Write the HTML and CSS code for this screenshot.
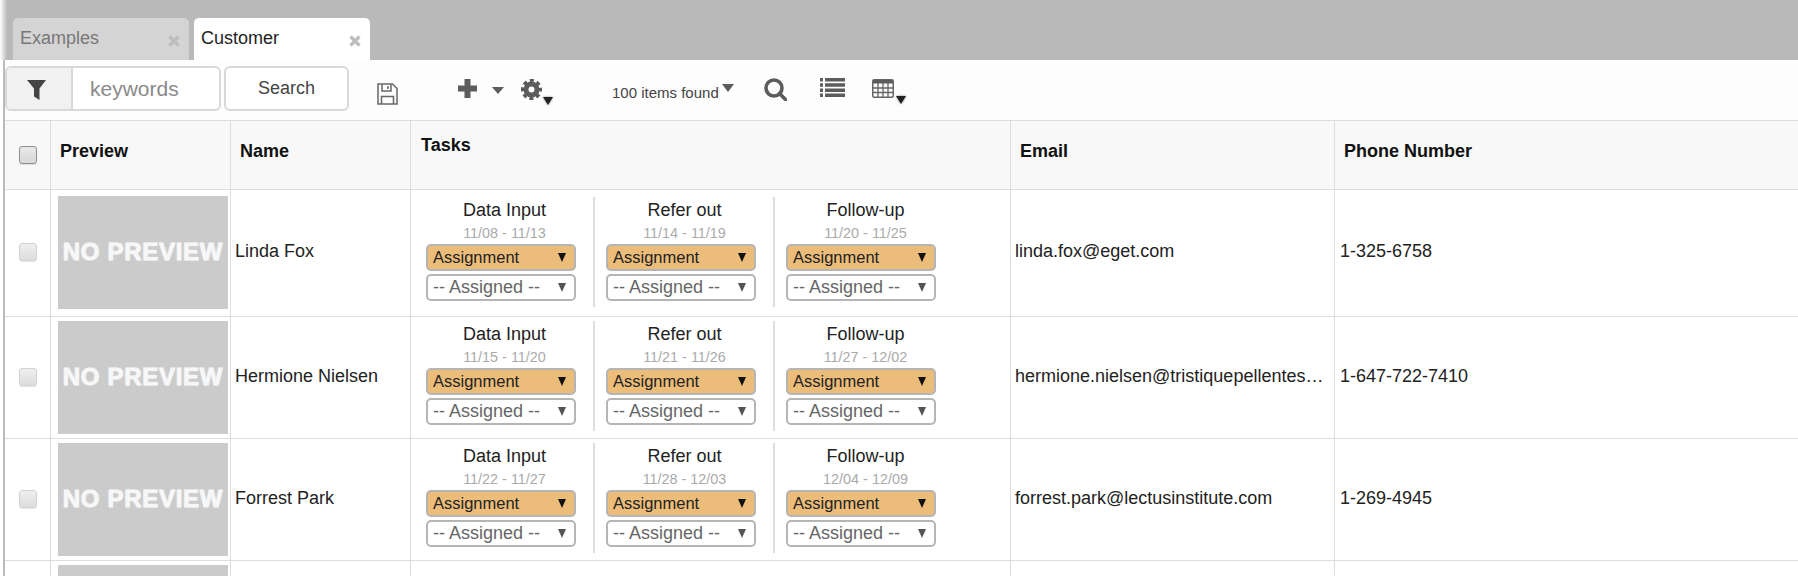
FILE: index.html
```html
<!DOCTYPE html>
<html lang="en">
<head>
  <meta charset="UTF-8">
  <title>Customer</title>
  <link rel="stylesheet" href="styles.css">
</head>
<body>
  <!-- Tabs -->
  <div class="tabbar">
    <div class="tab">
      <span>Examples</span>
      <svg class="tab-close" width="12" height="12" viewBox="0 0 12 12"><path d="M1.5 1.5l9 9M10.5 1.5l-9 9"/></svg>
    </div>
    <div class="tab tab-active">
      <span>Customer</span>
      <svg class="tab-close" width="12" height="12" viewBox="0 0 12 12"><path d="M1.5 1.5l9 9M10.5 1.5l-9 9"/></svg>
    </div>
  </div>

  <div class="main">
    <!-- Toolbar -->
    <div class="toolbar">
      <div class="filter-box">
        <div class="filter-addon">
          <svg width="19" height="20" viewBox="0 0 19 20"><path class="fill-dark" d="M0 0h19l-6.5 8.5V20L7 16.5V8.5z"/></svg>
        </div>
        <span class="filter-text">keywords</span>
      </div>
      <button class="search-btn">Search</button>

      <svg class="icon icon-save" width="21" height="22" viewBox="0 0 21 22">
        <path class="line" d="M1 1h14.500l4.500 4.500V21H1z"/>
        <path class="line" d="M5 1.500V8h9V1.500M11 3v3M4.500 21v-7.500h12V21"/>
      </svg>
      <svg class="icon icon-plus" width="19" height="19" viewBox="0 0 19 19"><path class="fill" d="M6.500 0h6v6.500H19v6h-6.500V19h-6v-6.500H0v-6h6.500z"/></svg>
      <svg class="icon icon-caret" width="12" height="7" viewBox="0 0 12 7"><path class="fill" d="M0 0h12L6 7z"/></svg>

      <div class="icon icon-gear">
        <svg width="21" height="21" viewBox="0 0 21 21">
          <circle class="gear-ring" cx="10.500" cy="10.500" r="5.500"/>
          <circle class="gear-teeth" cx="10.500" cy="10.500" r="8.800"/>
        </svg>
        <svg class="badge" width="10" height="8" viewBox="0 0 10 8"><path d="M0 0h10L5 8z"/></svg>
      </div>

      <span class="count">100 items found</span>
      <svg class="icon icon-count-caret" width="12" height="8" viewBox="0 0 12 8"><path class="fill" d="M0 0h12L6 8z"/></svg>

      <svg class="icon icon-search" width="23" height="23" viewBox="0 0 23 23">
        <circle class="thick" cx="10" cy="10" r="8"/>
        <path class="thick" d="M15.500 15.500l6 6"/>
      </svg>
      <svg class="icon icon-list" width="25" height="19" viewBox="0 0 25 19">
        <path class="fill" d="M0 0h3v3.500H0zM5 0h20v3.500H5zM0 5.200h3v3.500H0zM5 5.200h20v3.500H5zM0 10.400h3v3.500H0zM5 10.400h20v3.500H5zM0 15.500h3V19H0zM5 15.500h20V19H5z"/>
      </svg>
      <div class="icon icon-table">
        <svg width="22" height="19" viewBox="0 0 22 19">
          <rect class="line" x="0.750" y="0.750" width="20.500" height="17.500" rx="1.500"/>
          <path class="fill" d="M1 1h20v3.500H1z"/>
          <path class="grid" d="M1 9h20M1 13.500h20M6 4v14M11 4v14M16 4v14"/>
        </svg>
        <svg class="badge" width="10" height="8" viewBox="0 0 10 8"><path d="M0 0h10L5 8z"/></svg>
      </div>
    </div>

    <!-- Table -->
    <table class="grid-table">
      <colgroup>
        <col class="col-check"><col class="col-preview"><col class="col-name"><col class="col-tasks"><col class="col-email"><col>
      </colgroup>
      <thead>
        <tr>
          <th class="check-cell"><input type="checkbox" class="check check-head"></th>
          <th>Preview</th>
          <th>Name</th>
          <th class="tasks-head">Tasks</th>
          <th>Email</th>
          <th>Phone Number</th>
        </tr>
      </thead>
      <tbody>
        <tr class="row-first">
          <td class="check-cell"><input type="checkbox" class="check"></td>
          <td class="preview-cell"><div class="no-preview">NO PREVIEW</div></td>
          <td>Linda Fox</td>
          <td class="tasks-cell">
            <div class="tasks">
              <div class="task">
                <div class="task-title">Data Input</div>
                <div class="task-date">11/08 - 11/13</div>
                <div class="pick pick-assign">Assignment</div>
                <div class="pick">-- Assigned --</div>
              </div>
              <div class="task">
                <div class="task-title">Refer out</div>
                <div class="task-date">11/14 - 11/19</div>
                <div class="pick pick-assign">Assignment</div>
                <div class="pick">-- Assigned --</div>
              </div>
              <div class="task">
                <div class="task-title">Follow-up</div>
                <div class="task-date">11/20 - 11/25</div>
                <div class="pick pick-assign">Assignment</div>
                <div class="pick">-- Assigned --</div>
              </div>
            </div>
          </td>
          <td>linda.fox@eget.com</td>
          <td class="phone-cell">1-325-6758</td>
        </tr>
        <tr>
          <td class="check-cell"><input type="checkbox" class="check"></td>
          <td class="preview-cell"><div class="no-preview">NO PREVIEW</div></td>
          <td>Hermione Nielsen</td>
          <td class="tasks-cell">
            <div class="tasks">
              <div class="task">
                <div class="task-title">Data Input</div>
                <div class="task-date">11/15 - 11/20</div>
                <div class="pick pick-assign">Assignment</div>
                <div class="pick">-- Assigned --</div>
              </div>
              <div class="task">
                <div class="task-title">Refer out</div>
                <div class="task-date">11/21 - 11/26</div>
                <div class="pick pick-assign">Assignment</div>
                <div class="pick">-- Assigned --</div>
              </div>
              <div class="task">
                <div class="task-title">Follow-up</div>
                <div class="task-date">11/27 - 12/02</div>
                <div class="pick pick-assign">Assignment</div>
                <div class="pick">-- Assigned --</div>
              </div>
            </div>
          </td>
          <td>hermione.nielsen@tristiquepellentes…</td>
          <td class="phone-cell">1-647-722-7410</td>
        </tr>
        <tr>
          <td class="check-cell"><input type="checkbox" class="check"></td>
          <td class="preview-cell"><div class="no-preview">NO PREVIEW</div></td>
          <td>Forrest Park</td>
          <td class="tasks-cell">
            <div class="tasks">
              <div class="task">
                <div class="task-title">Data Input</div>
                <div class="task-date">11/22 - 11/27</div>
                <div class="pick pick-assign">Assignment</div>
                <div class="pick">-- Assigned --</div>
              </div>
              <div class="task">
                <div class="task-title">Refer out</div>
                <div class="task-date">11/28 - 12/03</div>
                <div class="pick pick-assign">Assignment</div>
                <div class="pick">-- Assigned --</div>
              </div>
              <div class="task">
                <div class="task-title">Follow-up</div>
                <div class="task-date">12/04 - 12/09</div>
                <div class="pick pick-assign">Assignment</div>
                <div class="pick">-- Assigned --</div>
              </div>
            </div>
          </td>
          <td>forrest.park@lectusinstitute.com</td>
          <td class="phone-cell">1-269-4945</td>
        </tr>
        <tr>
          <td></td>
          <td class="preview-cell"><div class="no-preview"></div></td>
          <td></td>
          <td></td>
          <td></td>
          <td></td>
        </tr>
      </tbody>
    </table>
  </div>
</body>
</html>
```

FILE: styles.css
```css
/* General */
html, body {
  height: 576px;
  overflow: hidden;
}
body {
  margin: 0;
  font-family: "Liberation Sans", Arial, sans-serif;
  font-size: 18px;
  color: #222;
  background: #fff;
}

/* Tabs */
.tabbar {
  display: flex;
  gap: 5px;
  height: 60px;
  box-sizing: border-box;
  padding: 18px 0 0 13px;
  background: linear-gradient(90deg, #fff 0, #b9b9b9 7px);
}
.tab {
  display: flex;
  justify-content: space-between;
  width: 176px;
  box-sizing: border-box;
  padding: 9px 9px 0 7px;
  line-height: 22px;
  color: #777;
  background: #d4d4d4;
  border-radius: 5px 5px 0 0;
}
.tab-active {
  color: #222;
  background: #fff;
}
.tab-close {
  margin-top: 8px;
}
.tab-close path {
  fill: none;
  stroke: #bdbdbd;
  stroke-width: 3.2;
}

/* Main panel */
.main {
  margin-left: 3px;
  border-left: 2px solid #bbb;
}

/* Toolbar */
.toolbar {
  display: flex;
  align-items: flex-start;
  height: 61px;
  box-sizing: border-box;
  background: #fdfdfd;
  border-bottom: 1px solid #ddd;
}
.filter-box {
  display: flex;
  width: 216px;
  height: 45px;
  box-sizing: border-box;
  margin-top: 6px;
  background: #fff;
  border: 2px solid #d8d8d8;
  border-radius: 6px;
}
.filter-addon {
  width: 66px;
  box-sizing: border-box;
  padding: 12px 0 0 20px;
  background: #f1f1f1;
  border-right: 2px solid #d8d8d8;
  border-radius: 4px 0 0 4px;
}
.filter-addon svg {
  display: block;
}
.fill-dark {
  fill: #444;
}
.filter-text {
  margin-left: 17px;
  font-size: 21px;
  line-height: 41px;
  color: #8a8a8a;
}
.search-btn {
  width: 125px;
  height: 45px;
  margin: 6px 0 0 3px;
  padding: 0 0 1px;
  font-family: inherit;
  font-size: 18px;
  color: #444;
  background: #fff;
  border: 2px solid #d8d8d8;
  border-radius: 6px;
}
.count {
  margin: 23px 0 0 70px;
  font-size: 15px;
  line-height: 20px;
  color: #444;
}

/* Toolbar icons */
.icon {
  display: block;
  flex: none;
}
.icon-save { margin: 23px 0 0 28px; }
.icon-plus { margin: 19px 0 0 60px; }
.icon-caret { margin: 27px 0 0 15px; }
.icon-gear { margin: 19px 0 0 17px; position: relative; height: 21px; }
.icon-count-caret { margin: 24px 0 0 3px; }
.icon-search { margin: 18px 0 0 30px; }
.icon-list { margin: 18px 0 0 33px; }
.icon-table { margin: 19px 0 0 27px; position: relative; height: 19px; }
.icon svg {
  display: block;
}
.fill {
  fill: #5c5c5c;
}
.line {
  fill: none;
  stroke: #666;
  stroke-width: 1.5;
}
.grid {
  fill: none;
  stroke: #666;
  stroke-width: 1.3;
}
.thick {
  fill: none;
  stroke: #5c5c5c;
  stroke-width: 3.600;
  stroke-linecap: round;
}
.gear-ring {
  fill: none;
  stroke: #5c5c5c;
  stroke-width: 5;
}
.gear-teeth {
  fill: none;
  stroke: #5c5c5c;
  stroke-width: 3.6;
  stroke-dasharray: 3.9 3.01;
  stroke-dashoffset: 1.95;
}
.badge {
  position: absolute;
  right: -11px;
  bottom: -5px;
  filter: drop-shadow(0 0 1px #888);
}
.icon-table .badge {
  right: -12px;
  bottom: -6px;
}
.badge path {
  fill: #222;
}

/* Table */
.grid-table {
  width: 1793px;
  table-layout: fixed;
  border-collapse: separate;
  border-spacing: 0;
}
.col-check { width: 46px; }
.col-preview { width: 180px; }
.col-name { width: 180px; }
.col-tasks { width: 600px; }
.col-email { width: 324px; }
.grid-table th,
.grid-table td {
  box-sizing: border-box;
  border-right: 1px solid #ddd;
  border-bottom: 1px solid #ddd;
}
.grid-table th:last-child,
.grid-table td:last-child {
  border-right: none;
}
.grid-table th {
  height: 69px;
  padding: 20px 0 0 9px;
  font-size: 18px;
  line-height: 20px;
  text-align: left;
  vertical-align: top;
  color: #111;
  background: #f8f8f8;
}
.grid-table th.tasks-head {
  padding: 14px 0 0 10px;
}
.grid-table th.check-cell {
  padding: 0;
  vertical-align: middle;
}
.grid-table td {
  height: 122px;
  padding: 0 0 3px 4px;
  vertical-align: middle;
  white-space: nowrap;
}
.grid-table .row-first td {
  height: 127px;
}
.grid-table td.check-cell {
  padding: 0 0 2px;
}
.check {
  display: block;
  width: 18px;
  height: 18px;
  margin: 0 auto 0 14px;
  appearance: none;
  background: linear-gradient(#eee, #ddd);
  border: 1px solid #d2d2d2;
  border-radius: 3px;
  box-shadow: 0 1px 1px rgba(0,0,0,0.1);
}
.check-head {
  background: linear-gradient(#e8e8e8, #d8d8d8);
  border-color: #8f8f8f;
}
.grid-table td.preview-cell {
  padding: 4px 2px 0 7px;
  vertical-align: top;
}
.grid-table .row-first td.preview-cell {
  padding-top: 6px;
}
.no-preview {
  height: 113px;
  font-size: 24px;
  font-weight: bold;
  line-height: 111px;
  letter-spacing: 0.7px;
  text-align: center;
  color: #f7f7f7;
  background: #cbcbcb;
  -webkit-text-stroke: 0.8px #f7f7f7;
  text-shadow: 0 0 2px rgba(255,255,255,0.6);
}
.grid-table td.phone-cell {
  padding-left: 5px;
}

/* Tasks */
.grid-table td.tasks-cell {
  padding: 4px 0 0 4px;
  vertical-align: top;
}
.grid-table .row-first td.tasks-cell {
  padding-top: 7px;
}
.tasks {
  display: flex;
}
.task {
  width: 180px;
  height: 110px;
  box-sizing: border-box;
  padding: 0 17px 0 11px;
  border-right: 2px solid #ddd;
}
.task:last-child {
  border-right: none;
}
.task-title {
  padding-left: 7px;
  line-height: 26px;
  text-align: center;
}
.task-date {
  padding-left: 7px;
  font-size: 14.4px;
  line-height: 21px;
  text-align: center;
  color: #aaa;
}
.pick {
  position: relative;
  width: 150px;
  height: 27px;
  box-sizing: border-box;
  margin-top: 3px;
  padding-left: 5px;
  line-height: 23px;
  color: #666;
  background: #fff;
  border: 2px solid #b5b5b5;
  border-radius: 5px;
}
.pick::after {
  content: "";
  position: absolute;
  top: 7px;
  right: 8px;
  border-top: 9px solid #555;
  border-left: 4.5px solid transparent;
  border-right: 4.5px solid transparent;
}
.pick-assign {
  margin-top: 0;
  font-size: 16.5px;
  color: #222;
  background: #ecbd7a;
}
.pick-assign::after {
  border-top-color: #111;
}
```
